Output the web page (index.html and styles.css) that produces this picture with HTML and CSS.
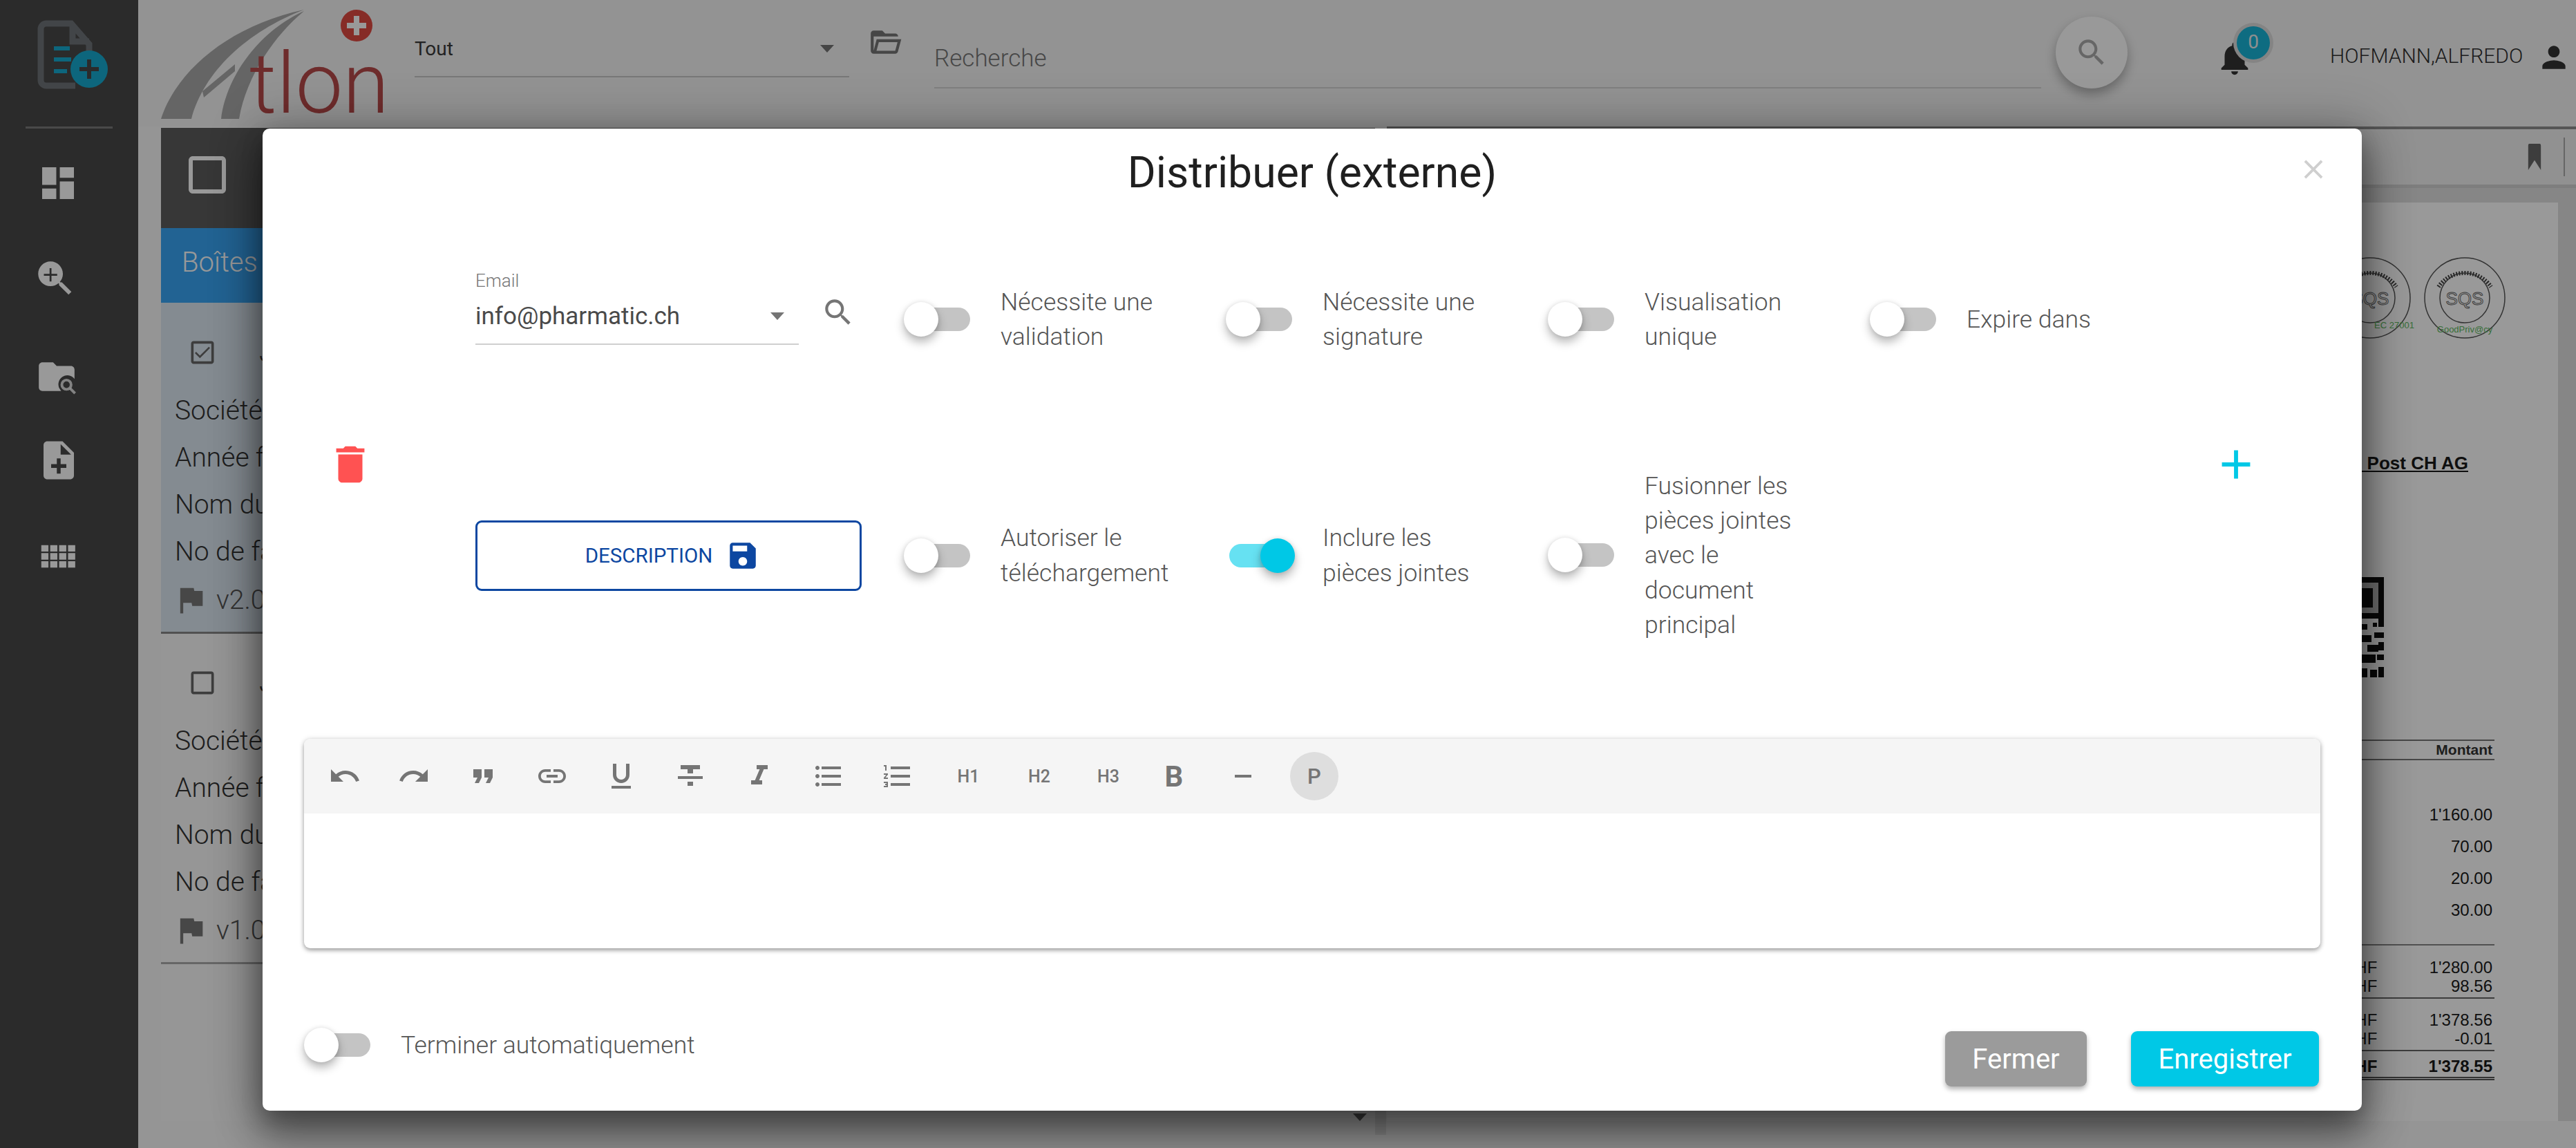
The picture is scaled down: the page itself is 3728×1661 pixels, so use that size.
FILE: index.html
```html
<!DOCTYPE html>
<html lang="fr">
<head>
<meta charset="utf-8">
<title>Distribuer (externe)</title>
<link rel="stylesheet" href="styles.css">
</head>
<body>
<div class="app">
  <nav class="sidebar">
    <svg class="nav-logo" viewBox="0 0 120 110" width="120" height="110">
      <path d="M54 8H24a8 8 0 0 0-8 8v74a8 8 0 0 0 8 8h42M54 8h6l26 30v20M62 10v24h24" fill="none" stroke="#6f7378" stroke-width="9"/>
      <rect x="35" y="41" width="23" height="6" fill="#17abd0"/>
      <rect x="35" y="57" width="25" height="6" fill="#17abd0"/>
      <rect x="35" y="74" width="19" height="6" fill="#17abd0"/>
      <circle cx="86" cy="74" r="27" fill="#17abd0"/>
      <path d="M86 60v28M72 74h28" stroke="#484848" stroke-width="6"/>
    </svg>
    <div class="nav-rule"></div>
    <svg class="nav-icon dash" viewBox="3 3 18 18" width="46" height="46" preserveAspectRatio="none"><path d="M3 13h8V3H3v10zm0 8h8v-6H3v6zm10 0h8V11h-8v10zm0-18v6h8V3h-8z"/></svg>
    <svg class="nav-icon zoomin" viewBox="0 0 24 24" width="66" height="66"><path d="M15.5 14h-.79l-.28-.27C15.41 12.59 16 11.11 16 9.5 16 5.91 13.09 3 9.5 3S3 5.91 3 9.5 5.91 16 9.5 16c1.61 0 3.09-.59 4.23-1.57l.27.28v.79l5 4.99L20.49 19l-4.99-5z"/><path d="M13 10.5h-3v3H9v-3H6v-1h3v-3h1v3h3z" fill="#484848"/></svg>
    <svg class="nav-icon foldersearch" viewBox="0 0 24 24" width="62" height="62"><path d="M20 6h-8l-2-2H4c-1.1 0-2 .9-2 2v12c0 1.1.9 2 2 2h10.5l-1-1.5a5 5 0 0 1 8.5-5.2V8c0-1.100-.9-2-2-2z"/><circle cx="17.500" cy="16.500" r="2.600" fill="none" stroke="#ffffff" stroke-opacity=".8" stroke-width="1.500"/><path d="M19.500 18.500l2.800 2.800" stroke="#ffffff" stroke-opacity=".8" stroke-width="1.500"/></svg>
    <svg class="nav-icon noteadd" viewBox="0 0 24 24" width="66" height="66"><path d="M14 2H6c-1.100 0-1.990.9-1.990 2L4 20c0 1.100.89 2 1.990 2H18c1.100 0 2-.9 2-2V8l-6-6zm2 14h-3v3h-2v-3H8v-2h3v-3h2v3h3v2zm-3-7V3.500L18.500 9H13z"/></svg>
    <svg class="nav-icon gridicon" viewBox="0 0 24 24" width="62" height="56" preserveAspectRatio="none"><path d="M3 9h4V5H3v4zm0 5h4v-4H3v4zm5 0h4v-4H8v4zm5 0h4v-4h-4v4zM8 9h4V5H8v4zm5-4v4h4V5h-4zm5 9h4v-4h-4v4zM3 19h4v-4H3v4zm5 0h4v-4H8v4zm5 0h4v-4h-4v4zm5 0h4v-4h-4v4zm0-14v4h4V5h-4z"/></svg>
  </nav>

  <div class="main">
    <header class="topbar">
      <svg class="logo" viewBox="0 0 345 200" width="345" height="200">
        <path d="M0 172C22 104 96 38 207 14 124 46 62 104 44 172Z" fill="#a8a8a8"/>
        <path d="M87 172C96 104 148 42 207 16 166 50 124 108 113 172Z" fill="#a8a8a8"/>
        <path d="M60 132L107 93V103L62 141Z" fill="#a8a8a8"/>
        <text x="128" y="163" class="logo-word">tlon</text>
        <circle cx="283" cy="37" r="23" fill="#e04a42"/>
        <path d="M283 23v28M269 37h28" stroke="#fff" stroke-width="8"/>
      </svg>
      <div class="scope">
        <span>Tout</span>
        <i class="caret"></i>
      </div>
      <svg class="folder" viewBox="0 0 24 24" width="50" height="50"><path d="M6.100 10L4 18V8h17a2 2 0 0 0-2-2h-7L10 4H4a2 2 0 0 0-2 2v12a2 2 0 0 0 2 2h15c.9 0 1.700-.6 1.900-1.500l2.300-8.500H6.100M19 18H6l1.600-6h13L19 18z"/></svg>
      <div class="query">Recherche</div>
      <div class="search-btn">
        <svg viewBox="0 0 24 24" width="50" height="50"><path d="M15.500 14h-.79l-.28-.27C15.410 12.590 16 11.110 16 9.500 16 5.910 13.090 3 9.500 3S3 5.910 3 9.500 5.910 16 9.500 16c1.610 0 3.090-.59 4.230-1.570l.27.28v.79l5 4.990L20.490 19l-4.990-5zm-6 0C7.010 14 5 11.990 5 9.500S7.010 5 9.500 5 14 7.010 14 9.500 11.990 14 9.500 14z"/></svg>
      </div>
      <div class="bell">
        <svg viewBox="0 0 24 24" width="58" height="58"><path d="M12 22c1.100 0 2-.9 2-2h-4c0 1.100.89 2 2 2zm6-6v-5c0-3.070-1.640-5.640-4.500-6.320V4c0-.83-.67-1.500-1.500-1.500s-1.500.67-1.500 1.500v.68C7.630 5.360 6 7.920 6 11v5l-2 2v1h16v-1l-2-2z"/></svg>
        <span class="badge">0</span>
      </div>
      <div class="user">HOFMANN,ALFREDO</div>
      <svg class="person" viewBox="0 0 24 24" width="50" height="50"><path d="M12 12c2.210 0 4-1.790 4-4s-1.790-4-4-4-4 1.790-4 4 1.790 4 4 4zm0 2c-2.670 0-8 1.340-8 4v2h16v-2c0-2.660-5.330-4-8-4z"/></svg>
    </header>

    <div class="content">
      <section class="list">
        <div class="list-head">
          <svg viewBox="0 0 24 24" width="72" height="72"><path d="M19 5v14H5V5h14m0-2H5c-1.100 0-2 .9-2 2v14c0 1.100.9 2 2 2h14c1.100 0 2-.9 2-2V5c0-1.100-.9-2-2-2z"/></svg>
        </div>
        <div class="list-tab">Boîtes de réception</div>
        <article class="doc-item selected">
          <div class="doc-top">
            <svg viewBox="0 0 24 24" width="44" height="44"><path d="M19 5v14H5V5h14m0-2H5c-1.100 0-2 .9-2 2v14c0 1.100.9 2 2 2h14c1.100 0 2-.9 2-2V5c0-1.100-.9-2-2-2z"/><path d="M10 16.500l-4-4 1-1 3 3 7-7 1 1z"/></svg>
            <span>Justificatif</span>
          </div>
          <p>Société : Die Post</p>
          <p>Année fiscale : 2021</p>
          <p>Nom du fournisseur</p>
          <p>No de facture</p>
          <div class="doc-version">
            <svg viewBox="0 0 24 24" width="52" height="52"><path d="M14.400 6L14 4H5v17h2v-7h5.600l.4 2h7V6z"/></svg>
            <span>v2.0</span>
          </div>
        </article>
        <article class="doc-item">
          <div class="doc-top">
            <svg viewBox="0 0 24 24" width="44" height="44"><path d="M19 5v14H5V5h14m0-2H5c-1.100 0-2 .9-2 2v14c0 1.100.9 2 2 2h14c1.100 0 2-.9 2-2V5c0-1.100-.9-2-2-2z"/></svg>
            <span>Justificatif</span>
          </div>
          <p>Société : Die Post</p>
          <p>Année fiscale : 2021</p>
          <p>Nom du fournisseur</p>
          <p>No de facture</p>
          <div class="doc-version">
            <svg viewBox="0 0 24 24" width="52" height="52"><path d="M14.400 6L14 4H5v17h2v-7h5.600l.4 2h7V6z"/></svg>
            <span>v1.0</span>
          </div>
        </article>
      </section>

      <div class="splitter"></div>

      <section class="viewer">
        <div class="viewer-bar">
          <svg class="bookmark" viewBox="0 0 24 24" preserveAspectRatio="none"><path d="M1 2q0-2 2-2h18q2 0 2 2v22l-11-9-11 9z"/></svg>
          <i class="viewer-sep"></i>
        </div>
        <div class="viewer-body">
          <div class="page">
            <div class="doc">
              <svg class="seals" viewBox="0 0 290 120" width="290" height="120">
                <g fill="none" stroke="#555" stroke-width="1.500">
                  <circle cx="90" cy="60" r="58"/><circle cx="90" cy="60" r="36"/>
                  <circle cx="227" cy="60" r="58"/><circle cx="227" cy="60" r="36"/>
                </g>
                <g fill="none" stroke="#444" stroke-width="6" stroke-dasharray="2 2">
                  <path d="M52 44A46 46 0 0 1 128 44"/>
                  <path d="M189 44A46 46 0 0 1 265 44"/>
                </g>
                <text x="90" y="70" class="seal-mark">SQS</text>
                <text x="227" y="70" class="seal-mark">SQS</text>
                <text x="125" y="104" class="seal-green">EC 27001</text>
                <text x="227" y="110" class="seal-green">GoodPriv@cy</text>
              </svg>
              <div class="post"><u>Die Post CH AG</u></div>
              <svg class="qr" viewBox="0 0 32 145" width="32" height="145">
                <path d="M0 0h32v60H0z" fill="#111"/>
                <path d="M0 8h24v44H0z" fill="#bbb"/>
                <path d="M0 16h16v28H0z" fill="#111"/>
                <path d="M0 68h8v8H0zM16 66h6v6h-6zM24 60h8v12h-8zM0 84h14v10H0zM18 80h14v8H18zM8 98h16v10H8zM24 94h8v12h-8zM0 112h20v12H0zM22 112h10v8H22zM0 132h8v13H0zM12 134h10v11H12zM24 130h8v15h-8z" fill="#111"/>
              </svg>
              <div class="row head"><span></span><span>Montant</span></div>
              <div class="lines">
                <div class="row"><span></span><span>1'160.00</span></div>
                <div class="row"><span></span><span>70.00</span></div>
                <div class="row"><span></span><span>20.00</span></div>
                <div class="row"><span></span><span>30.00</span></div>
              </div>
              <div class="totals first">
                <div class="row"><span>CHF</span><span>1'280.00</span></div>
                <div class="row"><span>CHF</span><span>98.56</span></div>
              </div>
              <div class="totals">
                <div class="row"><span>CHF</span><span>1'378.56</span></div>
                <div class="row"><span>CHF</span><span>-0.01</span></div>
              </div>
              <div class="totals grand">
                <div class="row"><span>CHF</span><span>1'378.55</span></div>
              </div>
            </div>
          </div>
        </div>
      </section>
    </div>
    <div class="pager"><i class="caret dark"></i></div>
  </div>
</div>

<div class="backdrop"></div>

<div class="modal" role="dialog">
  <h1 class="title">Distribuer (externe)</h1>
  <svg class="close" viewBox="0 0 24 24" width="46" height="46"><path d="M19 6.410L17.590 5 12 10.590 6.410 5 5 6.410 10.590 12 5 17.590 6.410 19 12 13.410 17.590 19 19 17.590 13.410 12z"/></svg>

  <div class="form">
    <svg class="trash" viewBox="0 0 24 24" width="70" height="70"><path d="M6 19c0 1.100.9 2 2 2h8c1.100 0 2-.9 2-2V7H6v12zM19 4h-3.500l-1-1h-5l-1 1H5v2h14V4z"/></svg>
    <div class="fields">
      <div class="email">
        <div class="email-field">
          <label>Email</label>
          <div class="email-value"><span>info@pharmatic.ch</span><i class="caret"></i></div>
        </div>
        <svg class="email-search" viewBox="0 0 24 24" width="50" height="50"><path d="M15.500 14h-.79l-.28-.27C15.410 12.590 16 11.110 16 9.500 16 5.910 13.090 3 9.500 3S3 5.910 3 9.500 5.910 16 9.500 16c1.610 0 3.090-.59 4.230-1.570l.27.28v.79l5 4.990L20.490 19l-4.990-5zm-6 0C7.010 14 5 11.990 5 9.500S7.010 5 9.500 5 14 7.010 14 9.500 11.990 14 9.500 14z"/></svg>
      </div>
      <div class="opt"><span class="switch"><i class="track"></i><i class="knob"></i></span><span class="opt-text">Nécessite une validation</span></div>
      <div class="opt"><span class="switch"><i class="track"></i><i class="knob"></i></span><span class="opt-text">Nécessite une signature</span></div>
      <div class="opt"><span class="switch"><i class="track"></i><i class="knob"></i></span><span class="opt-text">Visualisation unique</span></div>
      <div class="opt"><span class="switch"><i class="track"></i><i class="knob"></i></span><span class="opt-text">Expire dans</span></div>

      <div class="desc-cell">
        <button class="desc" type="button">
          <span>DESCRIPTION</span>
          <svg viewBox="0 0 24 24" width="50" height="50"><path d="M17 3H5c-1.110 0-2 .9-2 2v14c0 1.100.89 2 2 2h14c1.100 0 2-.9 2-2V7l-4-4zm-5 16c-1.660 0-3-1.340-3-3s1.340-3 3-3 3 1.340 3 3-1.340 3-3 3zm3-10H5V5h10v4z"/></svg>
        </button>
      </div>
      <div class="opt"><span class="switch"><i class="track"></i><i class="knob"></i></span><span class="opt-text">Autoriser le téléchargement</span></div>
      <div class="opt"><span class="switch on"><i class="track"></i><i class="knob"></i></span><span class="opt-text">Inclure les pièces jointes</span></div>
      <div class="opt"><span class="switch"><i class="track"></i><i class="knob"></i></span><span class="opt-text">Fusionner les pièces jointes avec le document principal</span></div>
    </div>
    <svg class="plus" viewBox="0 0 24 24" width="70" height="70"><path d="M19 13h-6v6h-2v-6H5v-2h6V5h2v6h6v2z"/></svg>
  </div>

  <div class="editor">
    <div class="toolbar">
      <span class="tool"><svg viewBox="0 0 24 24" width="48" height="48"><path d="M12.500 8c-2.650 0-5.050.99-6.900 2.600L2 7v9h9l-3.620-3.620c1.390-1.160 3.160-1.880 5.120-1.880 3.540 0 6.550 2.310 7.600 5.500l2.370-.78C21.080 11.030 17.150 8 12.500 8z"/></svg></span>
      <span class="tool"><svg viewBox="0 0 24 24" width="48" height="48"><path d="M18.400 10.600C16.550 8.990 14.150 8 11.500 8c-4.650 0-8.580 3.030-9.960 7.220L3.900 16c1.050-3.190 4.050-5.500 7.600-5.500 1.950 0 3.730.72 5.120 1.880L13 16h9V7l-3.600 3.600z"/></svg></span>
      <span class="tool"><svg viewBox="0 0 24 24" width="48" height="48"><path d="M6 17h3l2-4V7H5v6h3zm8 0h3l2-4V7h-6v6h3z"/></svg></span>
      <span class="tool"><svg viewBox="0 0 24 24" width="48" height="48"><path d="M3.900 12c0-1.710 1.390-3.100 3.100-3.100h4V7H7c-2.760 0-5 2.240-5 5s2.240 5 5 5h4v-1.900H7c-1.710 0-3.100-1.390-3.100-3.100zM8 13h8v-2H8v2zm9-6h-4v1.900h4c1.710 0 3.100 1.390 3.100 3.100s-1.390 3.100-3.100 3.100h-4V17h4c2.760 0 5-2.240 5-5s-2.240-5-5-5z"/></svg></span>
      <span class="tool"><svg viewBox="0 0 24 24" width="48" height="48"><path d="M12 17c3.310 0 6-2.690 6-6V3h-2.500v8c0 1.930-1.570 3.500-3.500 3.500S8.500 12.930 8.500 11V3H6v8c0 3.310 2.690 6 6 6zm-7 2v2h14v-2H5z"/></svg></span>
      <span class="tool"><svg viewBox="0 0 24 24" width="48" height="48"><path d="M10 19h4v-3h-4v3zM5 4v3h5v3h4V7h5V4H5zM3 14h18v-2H3v2z"/></svg></span>
      <span class="tool"><svg viewBox="0 0 24 24" width="48" height="48"><path d="M10 4v3h2.210l-3.420 8H6v3h8v-3h-2.210l3.420-8H18V4z"/></svg></span>
      <span class="tool"><svg viewBox="0 0 24 24" width="48" height="48"><path d="M4 10.500c-.83 0-1.500.67-1.500 1.500s.67 1.500 1.500 1.500 1.500-.67 1.500-1.500-.67-1.500-1.500-1.500zm0-6c-.83 0-1.500.67-1.500 1.500S3.170 7.500 4 7.500 5.500 6.830 5.500 6 4.830 4.500 4 4.500zm0 12c-.83 0-1.500.68-1.500 1.500s.68 1.500 1.500 1.500 1.500-.68 1.500-1.500-.67-1.500-1.500-1.500zM7 19h14v-2H7v2zm0-6h14v-2H7v2zm0-8v2h14V5H7z"/></svg></span>
      <span class="tool"><svg viewBox="0 0 24 24" width="48" height="48"><path d="M2 17h2v.5H3v1h1v.5H2v1h3v-4H2v1zm1-9h1V4H2v1h1v3zm-1 3h1.800L2 13.100v.9h3v-1H3.200L5 10.900V10H2v1zm5-6v2h14V5H7zm0 14h14v-2H7v2zm0-6h14v-2H7v2z"/></svg></span>
      <span class="tool txt h1">H1</span>
      <span class="tool txt h2">H2</span>
      <span class="tool txt h2">H3</span>
      <span class="tool txt bold">B</span>
      <span class="tool"><svg viewBox="0 0 24 24" width="48" height="48"><path d="M6 11h12v2H6z"/></svg></span>
      <span class="tool txt para"><b>P</b></span>
    </div>
    <div class="editor-body"></div>
  </div>

  <div class="footer">
    <div class="opt auto"><span class="switch"><i class="track"></i><i class="knob"></i></span><span class="opt-text">Terminer automatiquement</span></div>
    <div class="actions">
      <button class="btn grey" type="button">Fermer</button>
      <button class="btn cyan" type="button">Enregistrer</button>
    </div>
  </div>
</div>
</body>
</html>
```

FILE: styles.css
```css
* { box-sizing: border-box; }
html, body { margin: 0; padding: 0; }
body {
  width: 3728px;
  height: 1661px;
  overflow: hidden;
  position: relative;
  font-family: Roboto, "Liberation Sans", sans-serif;
  background: #f2f2f2;
}
.app { display: flex; width: 3728px; height: 1661px; }
i { display: block; }

/* sidebar */
.sidebar {
  width: 200px;
  flex: none;
  background: #484848;
  display: flex;
  flex-direction: column;
  align-items: flex-start;
}
.nav-logo { margin: 26px 0 0 43px; flex: none; }
.nav-rule { width: 126px; height: 3px; background: #7a7a7a; margin: 47px 0 0 37px; }
.nav-icon { fill: #fff; flex: none; }
.dash { margin: 56px 0 0 61px; }
.zoomin { margin: 82px 0 0 47px; }
.foldersearch { margin: 78px 0 0 51px; }
.noteadd { margin: 57px 0 0 52px; }
.gridicon { margin: 78px 0 0 52px; }

/* top bar */
.main { flex: 1; min-width: 0; display: flex; flex-direction: column; background: #f8f8f8; position: relative; }
.topbar { height: 183px; flex: none; display: flex; align-items: flex-start; background: #f5f5f5; }
.logo { margin-left: 33px; flex: none; }
.logo-word { font-family: Roboto, sans-serif; font-weight: 300; font-size: 122px; fill: #b84a4a; }
.scope {
  margin-left: 22px;
  width: 629px;
  height: 112px;
  padding-top: 30px;
  flex: none;
  display: flex;
  align-items: center;
  justify-content: space-between;
  padding-right: 22px;
  border-bottom: 2px solid #c9c9c9;
  font-size: 28px;
  color: #3a3a3a;
}
.caret { width: 0; height: 0; border-left: 10px solid transparent; border-right: 10px solid transparent; border-top: 11px solid #757575; }
.folder { margin: 36px 0 0 27px; fill: #757575; flex: none; }
.query {
  margin-left: 46px;
  width: 1602px;
  height: 128px;
  padding-top: 42px;
  flex: none;
  display: flex;
  align-items: center;
  border-bottom: 2px solid #d6d6d6;
  font-size: 35px;
  font-weight: 300;
  color: #777;
}
.search-btn {
  margin: 24px 0 0 21px;
  width: 104px;
  height: 104px;
  flex: none;
  border-radius: 50%;
  background: #fff;
  box-shadow: 0 8px 16px rgba(0,0,0,.3);
  display: flex;
  align-items: center;
  justify-content: center;
  fill: #aaa;
}
.bell { margin: 55px 0 0 126px; width: 58px; height: 58px; flex: none; position: relative; }
.bell svg { fill: #333; display: block; }
.badge {
  position: absolute;
  left: 32px;
  top: -17px;
  width: 48px;
  height: 48px;
  border-radius: 50%;
  background: #18b4d8;
  box-shadow: 0 0 0 5px #ddd;
  color: #eee;
  font-size: 28px;
  line-height: 46px;
  text-align: center;
}
.user { margin: 61px 0 0 109px; flex: none; width: 293px; font-size: 30px; line-height: 40px; font-weight: 300; color: #2f2f2f; white-space: nowrap; }
.person { margin: 58px 0 0 6px; fill: #333; flex: none; }

/* content */
.content { display: flex; height: 1439px; flex: none; padding-left: 33px; }
.list { width: 1757px; flex: none; margin-top: 2px; background: #fafafa; }
.list-head { height: 145px; background: #5c5c5c; display: flex; align-items: center; padding: 0 0 10px 31px; fill: #fff; }
.list-tab { height: 108px; background: #3aa5f6; color: #fff; font-size: 40px; font-weight: 300; line-height: 100px; padding-left: 30px; }
.doc-item { padding: 40px 0 12px 20px; border-bottom: 3px solid #aaa; margin-bottom: 9px; color: #444; }
.doc-item.selected { padding-top: 50px; background: #dde8f2; border-bottom-color: #888; }
.doc-item p { margin: 0; font-size: 39px; font-weight: 300; line-height: 68px; color: #333; }
.doc-top { display: flex; align-items: center; height: 44px; margin: 0 0 28px 18px; fill: #666; font-size: 38px; font-weight: 300; gap: 60px; }
.doc-version { display: flex; align-items: center; height: 68px; margin: 2px 0 0 -3px; gap: 11px; font-size: 39px; font-weight: 300; fill: #777; color: #555; }

.splitter { width: 17px; flex: none; }
.viewer { flex: 1; min-width: 0; display: flex; flex-direction: column; height: 1439px; }
.viewer-bar {
  height: 89px;
  flex: none;
  background: #f2f2f2;
  border-top: 4px solid #8e8e8e;
  border-bottom: 5px solid #d2d2d2;
  display: flex;
  align-items: center;
  justify-content: flex-end;
  padding-right: 16px;
  gap: 32px;
}
.bookmark { width: 20px; height: 38px; fill: #666; }
.viewer-sep { width: 2px; height: 56px; background: #aaa; }
.viewer-body { flex: 1; background: #e0e0e0; padding: 21px 26px 0 0; display: flex; justify-content: flex-end; }
.page { width: 100%; background: #fff; display: flex; justify-content: flex-end; padding-right: 72px; }
.doc { width: 300px; font-family: "Liberation Sans", Arial, sans-serif; color: #1a1a1a; font-size: 24px; }
.seals { display: block; margin: 78px 0 0 10px; }
.seal-mark { font-family: "Liberation Sans", sans-serif; font-size: 26px; text-anchor: middle; fill: none; stroke: #666; }
.seal-green { font-family: "Liberation Sans", sans-serif; font-size: 13px; text-anchor: middle; fill: #5cb85c; }
.post { margin-top: 164px; font-size: 26px; line-height: 30px; font-weight: 700; display: flex; justify-content: flex-end; padding-right: 58px; white-space: nowrap; }
.qr { display: block; margin: 150px 0 0 88px; }
.row { display: flex; justify-content: space-between; padding-right: 3px; }
.row span:first-child { margin-left: 61px; }
.row.head { margin: 90px 20px 0 0; height: 30px; line-height: 26px; font-size: 21px; font-weight: 700; color: #333; border-top: 2px solid #777; border-bottom: 2px solid #777; }
.lines { margin: 56px 20px 0 0; line-height: 46px; padding-bottom: 26px; border-bottom: 2px solid #888; }
.lines .row { height: 46px; }
.totals { margin-right: 20px; padding: 17px 0 3px; line-height: 27px; border-bottom: 2px solid #666; }
.totals.first { padding-top: 18px; }
.totals.grand { padding: 8px 0 2px; font-weight: 700; border-bottom: 5px double #555; }

.pager {
  position: absolute;
  left: 1745px;
  top: 1607px;
  width: 61px;
  height: 35px;
  display: flex;
  justify-content: flex-start;
  padding: 4px 0 0 13px;
  border-right: 16px solid #e4e4e4;
}
.caret.dark { border-top-color: #666; }

/* dialog */
.backdrop { position: absolute; inset: 0; background: rgba(0,0,0,.4); }
.modal {
  position: absolute;
  left: 380px;
  top: 186px;
  width: 3038px;
  height: 1421px;
  background: #fff;
  border-radius: 10px;
  box-shadow: 0 36px 60px 6px rgba(0,0,0,.36), 0 14px 30px rgba(0,0,0,.22), 0 0 70px 12px rgba(0,0,0,.2);
}
.title { margin: 0; padding-top: 29px; height: 99px; font-size: 62.500px; line-height: 70px; font-weight: 400; color: #1f1f1f; text-align: center; }
.close { position: absolute; left: 2945px; top: 36px; fill: #cfcfcf; }

.form { display: flex; align-items: flex-start; margin-top: 106px; height: 538px; }
.trash { margin: 246px 0 0 92px; fill: #ff5252; flex: none; }
.fields {
  margin-left: 146px;
  display: grid;
  grid-template-columns: 620px repeat(4, 466px);
  grid-template-rows: 142px 253px;
  row-gap: 144px;
  align-items: center;
  flex: none;
}
.plus { margin: 246px 0 0 29px; fill: #00c8e6; flex: none; }

.email { display: flex; align-self: start; }
.email-field { width: 468px; }
.email-field label { display: block; font-size: 26px; line-height: 30px; font-weight: 300; color: #777; }
.email-value {
  height: 78px;
  display: flex;
  align-items: center;
  justify-content: space-between;
  padding: 0 21px 4px 0;
  border-bottom: 2px solid #cfcfcf;
  font-size: 35px;
  color: #4a4a4a;
}
.email-search { margin: 36px 0 0 32px; fill: #757575; flex: none; }

.opt { display: flex; align-items: center; gap: 40px; }
.opt-text { width: 262px; font-size: 35.500px; line-height: 50.200px; font-weight: 300; color: #555; }
.switch { position: relative; width: 100px; height: 50px; flex: none; display: block; }
.track { position: absolute; left: 4px; top: 8px; width: 92px; height: 34px; border-radius: 17px; background: #c4c4c4; }
.knob { position: absolute; left: 0; top: 0; width: 50px; height: 50px; border-radius: 50%; background: #fff; box-shadow: 0 8px 14px rgba(0,0,0,.28), 0 0 6px rgba(0,0,0,.1); }
.switch.on .track { background: #66e1f2; left: 5px; }
.switch.on .knob { left: 50px; background: #00c8e6; }

.desc-cell { display: flex; }
.desc {
  width: 559px;
  height: 102px;
  background: #fff;
  border: 3px solid #0d47a1;
  border-radius: 9px;
  color: #0d47a1;
  fill: #0d47a1;
  font-family: inherit;
  font-size: 29.500px;
  display: flex;
  align-items: center;
  justify-content: center;
  gap: 19px;
  padding: 0 0 0 12px;
}

.editor {
  margin: 140px 0 0 60px;
  width: 2918px;
  height: 303px;
  border-radius: 9px;
  background: #fff;
  box-shadow: 0 3px 6px rgba(0,0,0,.35), 0 0 8px rgba(0,0,0,.1);
  overflow: hidden;
}
.toolbar { height: 108px; background: #f5f5f5; display: flex; align-items: center; padding-left: 9px; }
.tool { width: 100px; flex: none; display: flex; justify-content: center; align-items: center; fill: #757575; color: #757575; }
.tool.txt { font-size: 25px; font-weight: 500; }
.tool.h1 { padding-left: 5px; }
.tool.h2 { padding-left: 10px; }
.tool.bold { font-size: 42px; font-weight: 700; }
.tool.para { margin-left: 3px; font-size: 31px; }
.tool.para b { width: 70px; height: 70px; border-radius: 50%; background: #dedede; display: flex; align-items: center; justify-content: center; font-weight: 500; }

.footer { display: flex; align-items: flex-start; justify-content: space-between; margin-top: 115px; padding: 0 62px 0 60px; }
.auto .opt-text { width: auto; white-space: nowrap; line-height: 50px; }
.actions { display: flex; gap: 64px; margin-top: 5px; }
.btn { height: 80px; border: 0; border-radius: 9px; color: #fff; font-family: inherit; font-size: 40px; box-shadow: 0 4px 7px rgba(0,0,0,.3); }
.grey { width: 205px; background: #9b9b9b; }
.cyan { width: 272px; background: #00c8e6; }
```
